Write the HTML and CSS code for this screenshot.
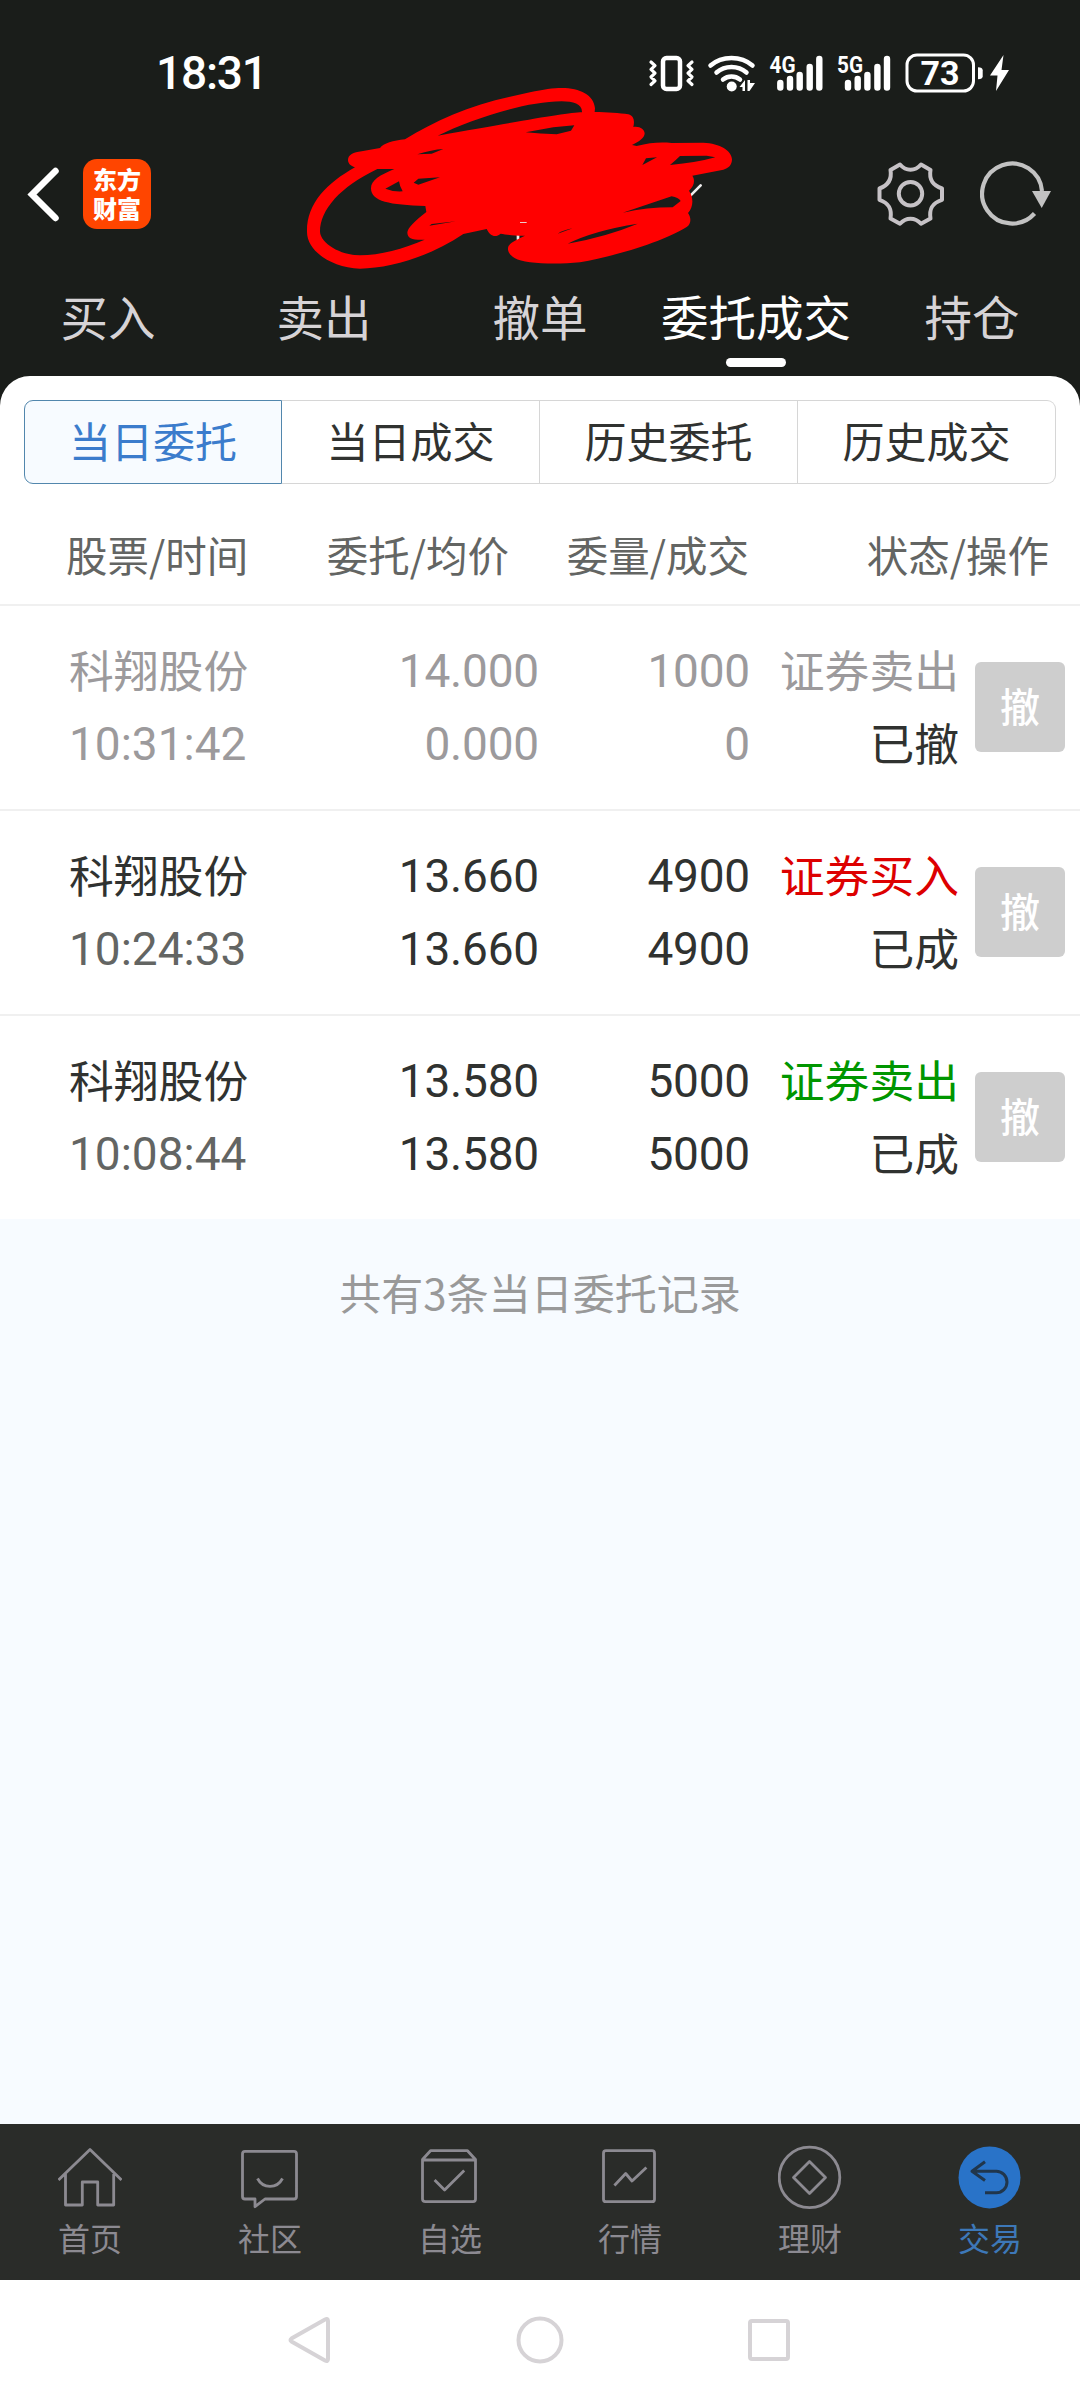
FILE: index.html
```html
<!DOCTYPE html>
<html lang="zh-CN">
<head>
<meta charset="utf-8">
<title>委托成交</title>
<link rel="stylesheet" href="styles.css">
</head>
<body>
<div class="screen">
  <header class="top">
    <div class="status">
      <span class="clock">18:31</span>
      <svg class="status-icons" width="380" height="46" viewBox="0 0 380 46">
        <g fill="none" stroke="#fff" stroke-linecap="round" stroke-linejoin="round">
          <rect x="23" y="8" width="17" height="31" rx="3.5" stroke-width="4.5"/>
          <path d="M11 12l4 3.7-4 3.7 4 3.8-4 3.8 4 3.8-4 3.7M52 12l-4 3.7 4 3.7-4 3.8 4 3.8-4 3.8 4 3.7" stroke-width="3.2"/>
          <path d="M70.500 15.500C82 5.500 101 5.500 112.500 15.500M76.500 22.500C85 15 98 15 106.500 22.500M83 29.500C88 25.500 95 25.500 100 29.500" stroke-width="4.500"/>
          <path d="M140.300 33v4.500M150 29v8.500M159.700 25v12.500M169.700 17v20.500M179.300 9v28.500M208 33v4.500M217.700 29v8.500M227.400 25v12.500M237.400 17v20.500M247 9v28.500" stroke-width="6.400"/>
          <rect x="267" y="5" width="66.500" height="36" rx="10" stroke-width="3"/>
        </g>
        <g fill="#fff">
          <circle cx="91.700" cy="36.500" r="5"/>
          <path d="M99.500 37l5.500-7v11h-2.500v-4zM107.500 30h2.500v3h5l-5.500 8h-2z"/>
          <path d="M338 17.300q4.700 0 4.700 3v6q0 3-4.700 3z"/>
          <path d="M363.500 5L350 25.500h7.500L356 41l13-21h-7.500z"/>
          <text class="net" x="129.500" y="22.700" textLength="26" lengthAdjust="spacingAndGlyphs">4G</text>
          <text class="net" x="197" y="22.700" textLength="26" lengthAdjust="spacingAndGlyphs">5G</text>
          <text class="level" x="300" y="35" text-anchor="middle">73</text>
        </g>
      </svg>
    </div>
    <div class="titlebar">
      <svg class="back" width="36" height="60" viewBox="0 0 36 60"><path d="M29.500 7L6 30.500 29.500 54" fill="none" stroke="#fff" stroke-width="6.500" stroke-linecap="round"/></svg>
      <div class="logo">东方财富</div>
      <svg class="gear" width="68" height="66" viewBox="0 0 68 66" fill="none" stroke="#c6c2c6" stroke-width="4" stroke-linejoin="round">
        <path d="M23 3.500C29 10.500 38 10.500 44 3.500L53.500 9C52 18 55 24 65 27.500V38.800C55 42 52 48 53.500 57.500L44 62.800C38 56 29 56 23 62.800L13.500 57.500C15 48 12 42 2.500 38.800V27.500C12 24 15 18 13.500 9Z"/>
        <circle cx="33.500" cy="32.700" r="11.700"/>
      </svg>
      <svg class="refresh" width="72" height="66" viewBox="0 0 72 66">
        <path d="M62 30A30 30 0 1 0 54.500 52.500" fill="none" stroke="#c2c2c2" stroke-width="4.200"/>
        <path d="M52 30h19l-9.300 17z" fill="#c2c2c2"/>
      </svg>
      <svg class="scribble" width="460" height="200" viewBox="0 0 1380 600">
        <path fill="none" stroke="#eee" stroke-width="8" stroke-linecap="round" d="M1202 346l30-30M684 466v12"/>
        <path fill="#f00" fill-rule="evenodd" d="M174 240C174 225 190 217 215 214L270 204C280 190 310 182 345 178C430 125 540 75 660 50L720 37C760 28 790 24 815 24C870 24 912 45 915 85L914 96C950 96 990 99 1015 103C1033 108 1034 125 1030 141C1050 138 1063 148 1064 160C1064 175 1045 186 1026 195L1040 198C1080 188 1110 186 1145 189L1240 188C1290 190 1325 212 1326 238C1326 255 1315 266 1300 269L1207 287C1216 300 1213 318 1197 332C1210 350 1212 380 1194 399C1205 415 1203 432 1190 441C1120 485 970 530 870 547C790 555 700 550 675 535C650 520 648 500 665 488C680 478 695 472 705 467C680 468 650 464 632 461C615 475 600 467 590 447L520 462C420 530 300 565 210 566C120 563 50 510 51 455C50 370 110 310 195 262C182 258 174 250 174 240Z
          M262 267L313 267C270 285 243 300 243 325C243 365 300 375 406 378L409 396C375 422 352 445 352 458C353 475 365 480 404 479C340 507 270 525 210 526C150 525 92 490 90 455C90 390 150 320 262 267Z
          M443 167C540 120 700 65 815 64C850 64 877 72 876 97C830 98 700 122 443 167Z
          M707 157L790 142 853 136 843 152 800 163Q750 162 707 157Z
          M382 223Q425 209 460 207L425 221Z
          M286 326L327 304Q329 320 338 334 310 336 286 326Z
          M371 308L385 296 450 292 385 314Z
          M1057 255L1068 235 1101 232Z
          M1140 255Q1160 238 1170 228L1250 227 1276 232Q1220 248 1140 255Z
          M998 398L1145 349Q1165 352 1172 363L1148 382Q1070 382 998 398Z
          M833 491Q910 452 1043 431 950 470 833 491Z
          M418 437L425 432 498 424ZM803 461Q820 450 848 445Z"/>
        <path d="M690 427.500h20" stroke="#ecc" stroke-width="3"/>
      </svg>
    </div>
    <nav class="tabs">
      <span>买入</span><span>卖出</span><span>撤单</span><span class="on">委托成交</span><span>持仓</span>
    </nav>
  </header>
  <main class="panel">
    <div class="segments">
      <span class="on">当日委托</span><span>当日成交</span><span>历史委托</span><span>历史成交</span>
    </div>
    <div class="grid head"><span>股票/时间</span><span>委托/均价</span><span>委量/成交</span><span>状态/操作</span></div>
    <div class="grid row muted">
      <div><b>科翔股份</b><i class="time">10:31:42</i></div>
      <div><i>14.000</i><i>0.000</i></div>
      <div><i>1000</i><i>0</i></div>
      <div><b>证券卖出</b><b class="state">已撤</b></div>
      <button>撤</button>
    </div>
    <div class="grid row">
      <div><b>科翔股份</b><i class="time">10:24:33</i></div>
      <div><i>13.660</i><i>13.660</i></div>
      <div><i>4900</i><i>4900</i></div>
      <div><b class="buy">证券买入</b><b class="state">已成</b></div>
      <button>撤</button>
    </div>
    <div class="grid row">
      <div><b>科翔股份</b><i class="time">10:08:44</i></div>
      <div><i>13.580</i><i>13.580</i></div>
      <div><i>5000</i><i>5000</i></div>
      <div><b class="sell">证券卖出</b><b class="state">已成</b></div>
      <button>撤</button>
    </div>
  </main>
  <p class="summary">共有3条当日委托记录</p>
  <nav class="dock">
    <div class="item"><svg viewBox="0 0 64 66"><path d="M.5 35L32 4.500 63.500 35M7.500 29V60H24.300V37H39.700V60H55.700V29"/></svg><span>首页</span></div>
    <div class="item"><svg viewBox="0 0 64 66"><path d="M7 6.300H56Q58.500 6.300 58.500 9V51.500Q58.500 54 56 54H27L17 61.700V54H7Q4.500 54 4.500 51.500V9Q4.500 6.300 7 6.300ZM19.500 33.500C25 44 39 44 44.500 33.500"/></svg><span>社区</span></div>
    <div class="item"><svg viewBox="0 0 64 66"><path d="M4.500 14.500L12.500 5.700H49.500L57.500 14.500V54Q57.500 56.700 55 56.700H7.500Q4.500 56.700 4.500 54ZM4.500 15H57.500M16.600 35L26.600 45 46.200 25.500"/></svg><span>自选</span></div>
    <div class="item"><svg viewBox="0 0 64 66"><rect x="5.500" y="5.700" width="51" height="51" rx="2.500"/><path d="M16.400 40.500L27.700 28.500 34 36 48.400 22.500"/></svg><span>行情</span></div>
    <div class="item"><svg viewBox="0 0 64 66"><circle cx="31.500" cy="32.400" r="30.300"/><path d="M31.500 16.400L47.500 32.400 31.500 48.400 15.500 32.400Z"/></svg><span>理财</span></div>
    <div class="item on"><svg viewBox="0 0 64 66"><circle class="disc" cx="31.500" cy="32.400" r="31"/><path class="arrow" d="M27 16.700L14 26.300 27 35.500M14 26.300H38.300A10.700 10.700 0 0 1 38.300 47.700H27"/></svg><span>交易</span></div>
  </nav>
  <footer class="system">
    <svg width="50" height="50" viewBox="0 0 50 50"><path d="M39 4.500Q42 3 42 6V44Q42 47 39 45.500L5.500 26.500Q3.500 25 5.500 23.500Z"/></svg>
    <svg width="50" height="50" viewBox="0 0 50 50"><circle cx="25" cy="25" r="21.500"/></svg>
    <svg width="50" height="50" viewBox="0 0 50 50"><rect x="6" y="6" width="38" height="38" rx="2"/></svg>
  </footer>
</div>
</body>
</html>
```
FILE: styles.css
```css
* { box-sizing: border-box; }
body { margin: 0; font-family: "Noto Sans CJK SC", sans-serif; color: #303230; }
svg { display: block; flex: none; }
.screen { width: 1080px; height: 2400px; display: flex; flex-direction: column; background: #f7fbff; }
.top { height: 406px; flex: none; background: #1a1d1a; }
.status { height: 146px; padding: 0 60px 0 156px; display: flex; align-items: center; justify-content: space-between; color: #fff; }
.clock { font: 500 46px/1 Roboto, sans-serif; letter-spacing: -1.2px; }
.status-icons .net { font: 700 23px Roboto, sans-serif; }
.status-icons .level { font: 700 34px Roboto, sans-serif; }
.titlebar { position: relative; height: 96px; padding: 0 28px 0 26px; display: flex; align-items: center; }
.logo { width: 68px; height: 70px; margin-left: 21px; padding: 0 9px 2px 10px; border-radius: 14px; background: #ff4500; color: #fff; font-size: 24px; font-weight: 900; line-height: 29px; display: flex; align-items: center; }
.gear { margin-left: auto; }
.refresh { margin-left: 35px; }
.scribble { position: absolute; left: 290px; top: -66px; }
.tabs { height: 134px; display: grid; grid-template-columns: repeat(5, 1fr); color: #d6d3d6; font-size: 47.500px; line-height: 68px; text-align: center; padding-top: 40px; }
.tabs span { display: flex; flex-direction: column; align-items: center; }
.tabs .on { color: #fff; }
.tabs .on::after { content: ""; width: 60px; height: 9px; margin-top: 8px; border-radius: 5px; background: #fff; }
.panel { margin-top: -30px; height: 843px; flex: none; padding-top: 24px; background: #fff; border-radius: 30px 30px 0 0; }
.segments { height: 84px; margin: 0 24px; display: grid; grid-template-columns: repeat(4, 1fr); }
.segments span { border: 1.5px solid #d6d6d6; border-left: 0; padding-bottom: 4px; display: flex; align-items: center; justify-content: center; font-size: 42px; line-height: 60px; }
.segments span:last-child { border-radius: 0 9px 9px 0; }
.segments .on { border: 1.5px solid #5287ad; border-radius: 9px 0 0 9px; background: #f7fbff; color: #3b7ccc; }
.grid { display: grid; justify-content: start; }
.grid > :nth-child(n+2) { text-align: right; }
.head { height: 120px; align-items: center; padding: 20px 0 0 66px; grid-template-columns: 183px 260px 240px 300px; color: #636563; font-size: 41.500px; line-height: 60px; }
.row { height: 205px; border-top: 2px solid #f0f0f0; padding: 26px 0 0 69px; grid-template-columns: 183px 287px 211px 209px 90px; }
.row > div { display: flex; flex-direction: column; }
.row b, .row i { height: 73px; line-height: 73px; font-size: 44.800px; font-weight: 400; font-style: normal; white-space: nowrap; }
.row i { font-family: Roboto, sans-serif; font-size: 46px; letter-spacing: -.2px; padding-top: 3px; }
.row .time { color: #636563; letter-spacing: 0; }
.row .buy { color: #d00; }
.row .sell { color: #009600; }
.muted { color: #9c9a9c; }
.muted .time { color: #9c9a9c; }
.row .state { color: #303230; }
.row button { width: 90px; height: 90px; margin: 30px 0 0 16px; padding: 0 0 4px; border: 0; border-radius: 6px; background: #cecece; color: #fff; font: 500 40px/84px "Noto Sans CJK SC", sans-serif; text-align: center; }
.grid > button:last-child { text-align: center; }
.summary { margin: 43px 0 0; text-align: center; color: #999; font-size: 42px; line-height: 60px; }
.dock { margin-top: auto; height: 156px; flex: none; background: #2a2c29; display: grid; grid-template-columns: repeat(6, 1fr); }
.item { padding-top: 21px; display: flex; flex-direction: column; align-items: center; color: #8c8a91; font-size: 32px; line-height: 46px; }
.item svg { width: 64px; height: 66px; fill: none; stroke: #8c8a91; stroke-width: 2.800; stroke-linejoin: round; }
.item span { margin-top: 3px; }
.item.on { color: #3d78b8; }
.item .disc { fill: #2973c8; stroke: none; }
.item .arrow { stroke: #20364c; stroke-width: 3; }
.system { height: 120px; flex: none; background: #fff; display: flex; justify-content: center; gap: 179px; align-items: center; }
.system svg { fill: none; stroke: #d6d3d6; stroke-width: 4; }
```
